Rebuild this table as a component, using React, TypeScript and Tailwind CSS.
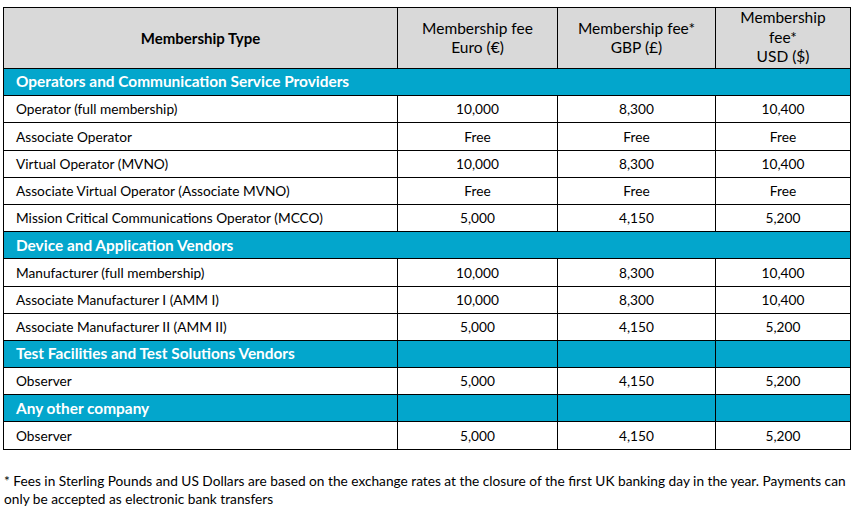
import React from 'react';

type Row = { name: string; eur: string; gbp: string; usd: string };
type Section = { title: string; merged: boolean; rows: Row[] };

const SECTIONS: Section[] = [
  {
    title: 'Operators and Communication Service Providers',
    merged: true,
    rows: [
      { name: 'Operator (full membership)', eur: '10,000', gbp: '8,300', usd: '10,400' },
      { name: 'Associate Operator', eur: 'Free', gbp: 'Free', usd: 'Free' },
      { name: 'Virtual Operator (MVNO)', eur: '10,000', gbp: '8,300', usd: '10,400' },
      { name: 'Associate Virtual Operator (Associate MVNO)', eur: 'Free', gbp: 'Free', usd: 'Free' },
      { name: 'Mission Critical Communications Operator (MCCO)', eur: '5,000', gbp: '4,150', usd: '5,200' },
    ],
  },
  {
    title: 'Device and Application Vendors',
    merged: true,
    rows: [
      { name: 'Manufacturer (full membership)', eur: '10,000', gbp: '8,300', usd: '10,400' },
      { name: 'Associate Manufacturer I (AMM I)', eur: '10,000', gbp: '8,300', usd: '10,400' },
      { name: 'Associate Manufacturer II (AMM II)', eur: '5,000', gbp: '4,150', usd: '5,200' },
    ],
  },
  {
    title: 'Test Facilities and Test Solutions Vendors',
    merged: false,
    rows: [{ name: 'Observer', eur: '5,000', gbp: '4,150', usd: '5,200' }],
  },
  {
    title: 'Any other company',
    merged: false,
    rows: [{ name: 'Observer', eur: '5,000', gbp: '4,150', usd: '5,200' }],
  },
];

const cell = 'border border-black h-[27.2px] p-0 leading-none';

export default function App() {
  return (
    <div className="w-[856px] h-[509px] bg-white text-black font-['Lato','Liberation_Sans',sans-serif] text-[13.7px]">
      <div className="pt-[7px] pl-[3px]">
        <table className="border-collapse table-fixed w-[847px]">
          <colgroup>
            <col className="w-[394px]" />
            <col className="w-[160px]" />
            <col className="w-[158px]" />
            <col className="w-[135px]" />
          </colgroup>
          <thead>
            <tr className="bg-[#d9d9d9] h-[61px] text-[15.5px]">
              <th className="border border-black font-bold text-center text-[15px]">Membership Type</th>
              <th className="border border-black font-normal text-center leading-[19px]">
                Membership fee<br />Euro (€)
              </th>
              <th className="border border-black font-normal text-center leading-[19px]">
                Membership fee*<br />GBP (£)
              </th>
              <th className="border border-black font-normal text-center leading-[19.5px] pb-[1px]">
                Membership<br />fee*<br />USD ($)
              </th>
            </tr>
          </thead>
          <tbody>
            {SECTIONS.map((s) => (
              <React.Fragment key={s.title}>
                <tr className="bg-[#03a6cc] text-white font-bold text-[15.4px]">
                  {s.merged ? (
                    <td colSpan={4} className={`${cell} pl-[12px]`}>{s.title}</td>
                  ) : (
                    <>
                      <td className={`${cell} pl-[12px]`}>{s.title}</td>
                      <td className={cell} />
                      <td className={cell} />
                      <td className={cell} />
                    </>
                  )}
                </tr>
                {s.rows.map((r, i) => (
                  <tr key={s.title + i}>
                    <td className={`${cell} pl-[12px]`}>{r.name}</td>
                    <td className={`${cell} text-center`}>{r.eur}</td>
                    <td className={`${cell} text-center`}>{r.gbp}</td>
                    <td className={`${cell} text-center`}>{r.usd}</td>
                  </tr>
                ))}
              </React.Fragment>
            ))}
          </tbody>
        </table>
      </div>
      <p className="mt-[22px] pl-[4px] leading-[18px] whitespace-nowrap text-[13.7px]">
        * Fees in Sterling Pounds and US Dollars are based on the exchange rates at the closure of the first UK banking day in the year. Payments can
        <br />
        only be accepted as electronic bank transfers
      </p>
    </div>
  );
}
